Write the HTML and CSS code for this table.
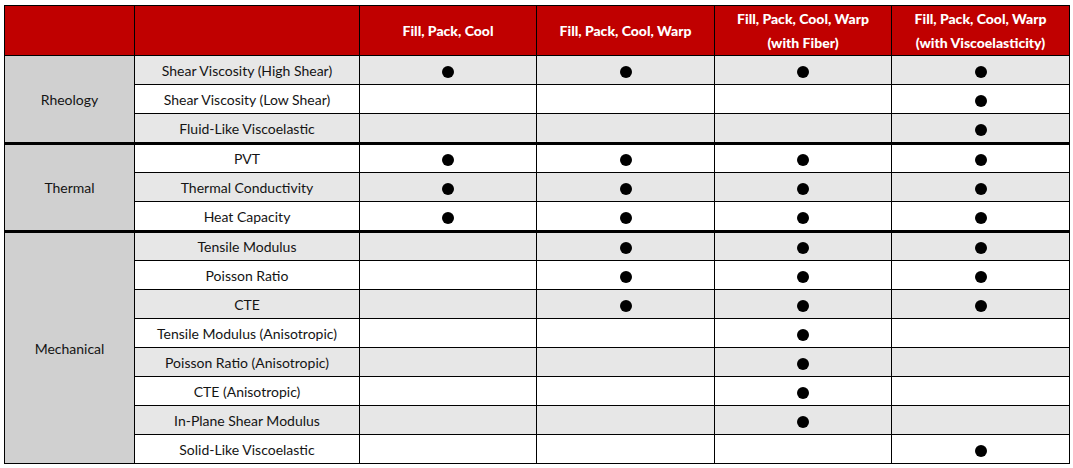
FILE: index.html
```html
<!DOCTYPE html>
<html>
<head>
<meta charset="utf-8">
<link rel="stylesheet" href="styles.css">
</head>
<body>
<table class="matrix">
  <colgroup>
    <col class="c-cat"><col class="c-prop"><col class="c-a"><col class="c-b"><col class="c-c"><col class="c-d">
  </colgroup>
  <thead>
    <tr class="head">
      <th></th><th></th>
      <th>Fill, Pack, Cool</th>
      <th>Fill, Pack, Cool, Warp</th>
      <th>Fill, Pack, Cool, Warp<br>(with Fiber)</th>
      <th>Fill, Pack, Cool, Warp<br>(with Viscoelasticity)</th>
    </tr>
  </thead>
  <tbody class="group">
    <tr class="shade"><td class="cat" rowspan="3">Rheology</td><td class="prop">Shear Viscosity (High Shear)</td><td><span class="dot"></span></td><td><span class="dot"></span></td><td><span class="dot"></span></td><td><span class="dot"></span></td></tr>
    <tr><td class="prop">Shear Viscosity (Low Shear)</td><td></td><td></td><td></td><td><span class="dot"></span></td></tr>
    <tr class="shade"><td class="prop">Fluid-Like Viscoelastic</td><td></td><td></td><td></td><td><span class="dot"></span></td></tr>
  </tbody>
  <tbody class="group">
    <tr><td class="cat" rowspan="3">Thermal</td><td class="prop">PVT</td><td><span class="dot"></span></td><td><span class="dot"></span></td><td><span class="dot"></span></td><td><span class="dot"></span></td></tr>
    <tr class="shade"><td class="prop">Thermal Conductivity</td><td><span class="dot"></span></td><td><span class="dot"></span></td><td><span class="dot"></span></td><td><span class="dot"></span></td></tr>
    <tr><td class="prop">Heat Capacity</td><td><span class="dot"></span></td><td><span class="dot"></span></td><td><span class="dot"></span></td><td><span class="dot"></span></td></tr>
  </tbody>
  <tbody class="group">
    <tr class="shade"><td class="cat" rowspan="8">Mechanical</td><td class="prop">Tensile Modulus</td><td></td><td><span class="dot"></span></td><td><span class="dot"></span></td><td><span class="dot"></span></td></tr>
    <tr><td class="prop">Poisson Ratio</td><td></td><td><span class="dot"></span></td><td><span class="dot"></span></td><td><span class="dot"></span></td></tr>
    <tr class="shade"><td class="prop">CTE</td><td></td><td><span class="dot"></span></td><td><span class="dot"></span></td><td><span class="dot"></span></td></tr>
    <tr><td class="prop">Tensile Modulus (Anisotropic)</td><td></td><td></td><td><span class="dot"></span></td><td></td></tr>
    <tr class="shade"><td class="prop">Poisson Ratio (Anisotropic)</td><td></td><td></td><td><span class="dot"></span></td><td></td></tr>
    <tr><td class="prop">CTE (Anisotropic)</td><td></td><td></td><td><span class="dot"></span></td><td></td></tr>
    <tr class="shade"><td class="prop">In-Plane Shear Modulus</td><td></td><td></td><td><span class="dot"></span></td><td></td></tr>
    <tr><td class="prop">Solid-Like Viscoelastic</td><td></td><td></td><td></td><td><span class="dot"></span></td></tr>
  </tbody>
</table>
</body>
</html>
```

FILE: styles.css
```css
html, body {
  margin: 0;
  padding: 0;
  background: #ffffff;
}
body {
  padding: 5px 0 0 4px;
  font-family: Lato, "Open Sans", "Liberation Sans", sans-serif;
}
.matrix {
  border-collapse: collapse;
  table-layout: fixed;
  width: 1066px;
}
.c-cat { width: 130px; }
.c-prop { width: 225px; }
.c-a { width: 177px; }
.c-b { width: 178px; }
.c-c { width: 177px; }
.c-d { width: 178px; }

.matrix th, .matrix td {
  border: 1px solid #000;
  padding: 0;
  text-align: center;
  vertical-align: middle;
}
.head th {
  background: #c00000;
  color: #ffffff;
  font-weight: 900;
  font-size: 14px;
  line-height: 24px;
  height: 49px;
}
.matrix td {
  height: 28px;
  font-size: 14px;
  color: #141414;
}
.shade td { background: #e7e7e7; }
.matrix td.cat { background: #d0d0d0; }
.group + .group tr:first-child td {
  border-top: 3px solid #000;
  height: 27px;
}
.dot {
  display: inline-block;
  width: 12px;
  height: 12px;
  border-radius: 50%;
  background: #000;
  vertical-align: middle;
}
```
